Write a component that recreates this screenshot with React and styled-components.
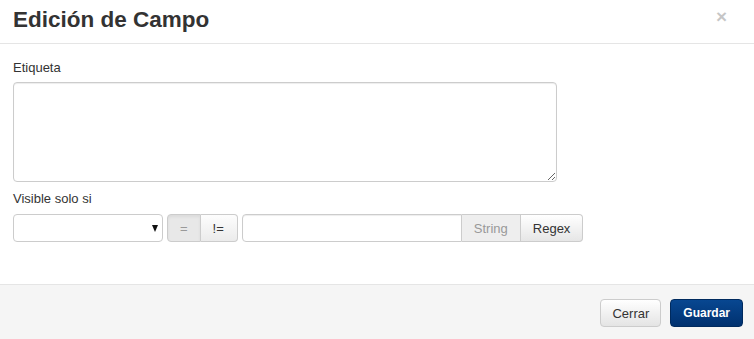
import React from "react";
import styled, { createGlobalStyle } from "styled-components";

const Global = createGlobalStyle`
  html, body { margin: 0; padding: 0; background: #fff; }
  body { font-family: "Liberation Sans", Arial, sans-serif; color: #333; }
  * { box-sizing: border-box; }
`;

const Modal = styled.div`
  display: flex;
  flex-direction: column;
  min-height: 100vh;
  width: 754px;
`;

const Header = styled.div`
  display: flex;
  align-items: flex-start;
  height: 44px;
  padding: 8px 13px 0 13px;
  border-bottom: 1px solid #e5e5e5;
`;

const Title = styled.h4`
  margin: 0;
  font-size: 22.5px;
  line-height: 24px;
  font-weight: bold;
  color: #333;
`;

const Close = styled.button`
  margin-left: auto;
  margin-right: 14px;
  margin-top: -1px;
  padding: 0;
  border: 0;
  background: transparent;
  font-family: "Liberation Sans", Arial, sans-serif;
  font-size: 19px;
  line-height: 20px;
  font-weight: bold;
  color: #000;
  opacity: 0.22;
  cursor: pointer;
`;

const Body = styled.div`
  padding: 14px 13px 42px 13px;
  display: flex;
  flex-direction: column;
`;

const Label = styled.label`
  display: block;
  font-size: 13px;
  line-height: 20px;
  color: #333;
  margin: ${(p) => p.$mt || 0}px 0 ${(p) => p.$mb || 0}px 0;
`;

const TextArea = styled.textarea`
  display: block;
  width: 544px;
  height: 100px;
  border: 1px solid #ccc;
  border-radius: 4px;
  box-shadow: inset 0 1px 1px rgba(0, 0, 0, 0.075);
  font-family: inherit;
  font-size: 13px;
  padding: 6px 10px;
  resize: both;
`;

const Row = styled.div`
  display: flex;
  align-items: stretch;
  height: 28px;
  gap: 4px;
`;

const SelectWrap = styled.div`
  position: relative;
  width: 150px;
  height: 28px;
`;

const Select = styled.select`
  appearance: none;
  -webkit-appearance: none;
  width: 100%;
  height: 100%;
  border: 1px solid #ccc;
  border-radius: 4px;
  background: #fff;
  font-family: inherit;
  font-size: 13px;
  padding: 0 20px 0 8px;
`;

const Caret = styled.span`
  position: absolute;
  right: 5px;
  top: 11px;
  width: 0;
  height: 0;
  border-left: 3.5px solid transparent;
  border-right: 3.5px solid transparent;
  border-top: 7px solid #111;
  pointer-events: none;
`;

const Group = styled.div`
  display: flex;
  align-items: stretch;
`;

const GroupButton = styled.button`
  font-family: "Liberation Sans", Arial, sans-serif;
  font-size: 13px;
  padding: 0 12px;
  border: 1px solid #ccc;
  color: ${(p) => (p.$active ? "#999" : "#333")};
  background: ${(p) =>
    p.$active ? "#e8e8e8" : "linear-gradient(#fdfdfd, #ebebeb)"};
  box-shadow: ${(p) => (p.$active ? "inset 0 2px 3px rgba(0,0,0,0.06)" : "none")};
  border-radius: 0;
  &:first-child { border-radius: 4px 0 0 4px; }
  &:last-child { border-radius: 0 4px 4px 0; border-left: 0; padding-right: 13px; }
`;

const InputGroup = styled.div`
  display: flex;
  align-items: stretch;
`;

const TextInput = styled.input`
  width: 220px;
  height: 28px;
  border: 1px solid #ccc;
  border-radius: 4px 0 0 4px;
  padding: 0 8px;
  font-family: inherit;
  font-size: 13px;
  box-shadow: inset 0 1px 1px rgba(0, 0, 0, 0.075);
`;

const Addon = styled.span`
  display: flex;
  align-items: center;
  padding: 0 12px;
  font-size: 13px;
  color: #999;
  background: #eee;
  border: 1px solid #ccc;
  border-left: 0;
`;

const AddonButton = styled.button`
  font-family: "Liberation Sans", Arial, sans-serif;
  font-size: 13px;
  color: #333;
  padding: 0 12px;
  border: 1px solid #ccc;
  border-left: 0;
  border-radius: 0 4px 4px 0;
  background: linear-gradient(#fff, #e6e6e6);
`;

const Footer = styled.div`
  flex: 1;
  display: flex;
  justify-content: flex-end;
  align-items: flex-start;
  gap: 9px;
  padding: 14px 11px 0 0;
  background: #f5f5f5;
  border-top: 1px solid #e5e5e5;
`;

const Button = styled.button`
  height: 28px;
  font-family: "Liberation Sans", Arial, sans-serif;
  font-size: ${(p) => (p.$primary ? "12px" : "13px")};
  font-weight: ${(p) => (p.$primary ? "bold" : "normal")};
  padding: 0 ${(p) => (p.$primary ? 12 : 11)}px;
  border-radius: 4px;
  border: 1px solid ${(p) => (p.$primary ? "#002a5e" : "#ccc")};
  color: ${(p) => (p.$primary ? "#fff" : "#333")};
  background: ${(p) =>
    p.$primary
      ? "linear-gradient(#084791, #00316f)"
      : "linear-gradient(#fff, #e4e4e4)"};
`;

export default function App() {
  return (
    <>
      <Global />
      <Modal>
        <Header>
          <Title>Edición de Campo</Title>
          <Close aria-label="Close">×</Close>
        </Header>
        <Body>
          <Label $mb={4}>Etiqueta</Label>
          <TextArea />
          <Label $mt={7} $mb={5}>Visible solo si</Label>
          <Row>
            <SelectWrap>
              <Select>
                <option></option>
              </Select>
              <Caret />
            </SelectWrap>
            <Group>
              <GroupButton $active>=</GroupButton>
              <GroupButton>!=</GroupButton>
            </Group>
            <InputGroup>
              <TextInput />
              <Addon>String</Addon>
              <AddonButton>Regex</AddonButton>
            </InputGroup>
          </Row>
        </Body>
        <Footer>
          <Button>Cerrar</Button>
          <Button $primary>Guardar</Button>
        </Footer>
      </Modal>
    </>
  );
}
